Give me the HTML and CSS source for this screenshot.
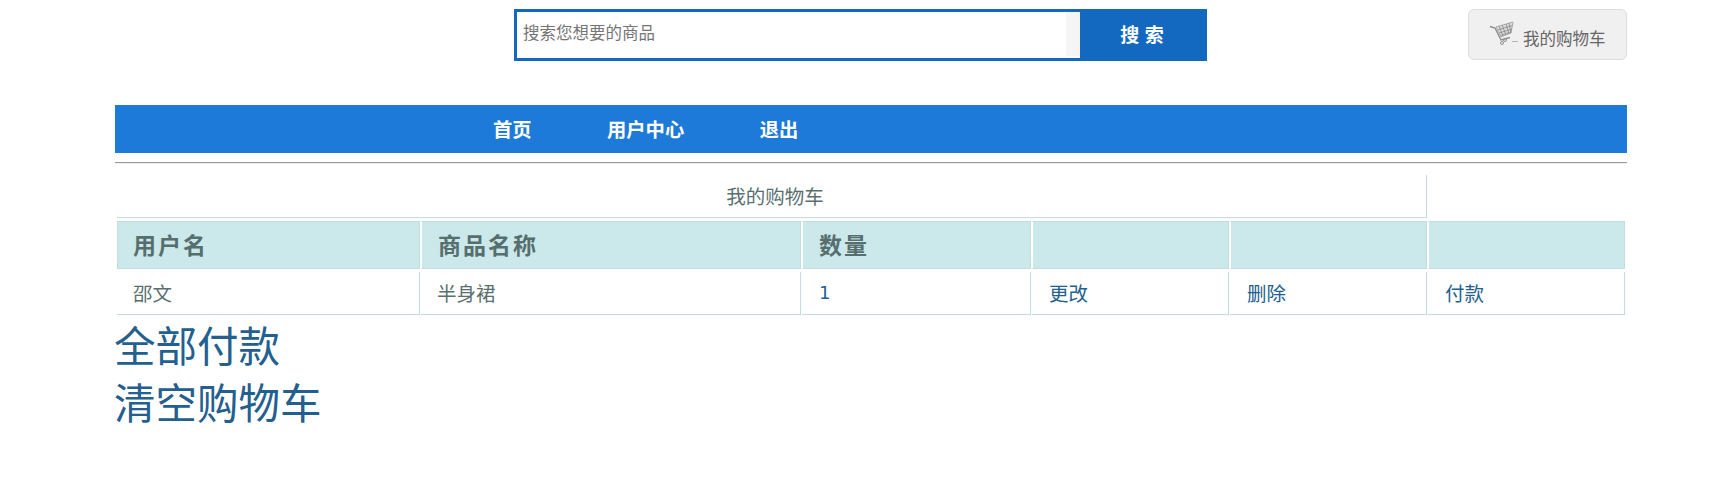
FILE: index.html
```html
<!DOCTYPE html>
<html lang="zh-CN">
<head>
    <meta charset="UTF-8">
    <title>我的购物车</title>
    <link rel="stylesheet" href="styles.css">
</head>
<body>
    <div class="top">
        <form class="search">
            <div class="search-input">搜索您想要的商品</div>
            <div class="search-strip"></div>
            <div class="search-btn">搜 索</div>
        </form>
        <a class="cart-btn" href="#">
            <svg class="cart-icon" width="30" height="26" viewBox="0 0 30 26">
                <path d="M2 7.5l5 1.5 6 12 9-2.5" fill="none" stroke="#8f8f8f" stroke-width="1.4"/>
                <path d="M8 8l17-5-2 11-10 4z" fill="#dcdcdc" stroke="#9a9a9a" stroke-width=".8"/>
                <path d="M11 7l4 10M14 6l4 10M18 5l3 10M21 4l2 10M9.500 11l15-4.500M11 14l13-4M12.500 16.500l10-3.500" fill="none" stroke="#7d7d7d" stroke-width=".7"/>
                <circle cx="17" cy="21" r="1.500" fill="none" stroke="#8f8f8f"/>
                <circle cx="14" cy="24" r="1.500" fill="none" stroke="#8f8f8f"/>
                <path d="M24 22.500h6" stroke="#b5b5b5"/>
            </svg>
            <span>我的购物车</span>
        </a>
    </div>

    <div class="nav">
        <a href="#">首页</a>
        <a href="#">用户中心</a>
        <a href="#">退出</a>
    </div>
    <hr class="line">

    <table class="cart-table">
        <colgroup>
            <col class="c1"><col class="c2"><col class="c3"><col class="c4"><col class="c5"><col class="c6">
        </colgroup>
        <tr>
            <td colspan="5" class="cap">我的购物车</td>
            <td class="blank"></td>
        </tr>
        <tr>
            <th>用户名</th>
            <th>商品名称</th>
            <th>数量</th>
            <th></th>
            <th></th>
            <th></th>
        </tr>
        <tr>
            <td>邵文</td>
            <td>半身裙</td>
            <td class="link num">1</td>
            <td class="link">更改</td>
            <td class="link">删除</td>
            <td class="link">付款</td>
        </tr>
    </table>

    <div class="actions">
        <a href="#">全部付款</a>
        <a href="#">清空购物车</a>
    </div>
</body>
</html>
```

FILE: styles.css
```css
body {
    margin: 0;
    padding: 0 106px 0 115px;
    font-family: "Liberation Sans", "Noto Sans CJK SC", sans-serif;
    color: #555;
    background: #fff;
}
a {
    text-decoration: none;
}
.top {
    display: flex;
    align-items: flex-start;
    padding-top: 9px;
    height: 105px;
    box-sizing: border-box;
}
.search {
    display: flex;
    width: 693px;
    height: 52px;
    margin-left: 399px;
    box-sizing: border-box;
    border: 3px solid #1368bf;
    background: #fff;
}
.search-input {
    flex: 1;
    color: #757575;
    font-size: 16.5px;
    line-height: 42px;
    padding-left: 6px;
}
.search-strip {
    width: 14px;
    margin-bottom: 2px;
    background: #f5f5f5;
}
.search-btn {
    width: 124px;
    background: #1368bf;
    color: #fff;
    font-size: 19px;
    font-weight: bold;
    line-height: 47px;
    text-align: center;
}
.cart-btn {
    display: flex;
    align-items: flex-start;
    gap: 5px;
    margin-left: auto;
    width: 159px;
    height: 51px;
    box-sizing: border-box;
    padding: 9px 0 0 19px;
    border: 1px solid #ddd;
    border-radius: 6px;
    background: #f0f0f0;
    color: #666;
    font-size: 16.5px;
    line-height: 34px;
}
.cart-btn span {
    margin-top: 3px;
}
.nav {
    display: flex;
    gap: 75.5px;
    height: 48px;
    padding-left: 378px;
    background: #1e7ad9;
}
.nav a {
    color: #fff;
    font-size: 19.3px;
    font-weight: bold;
    line-height: 51px;
}
.line {
    margin: 9px 0 0;
    border: 0;
    border-top: 1px solid #999;
    border-bottom: 1px solid #eee;
}
.cart-table {
    width: 1510px;
    margin: 8px 0 0 1px;
    border-collapse: separate;
    border-spacing: 1px 3px;
    table-layout: fixed;
    font-size: 19.5px;
}
.c1 { width: 303px; }
.c2 { width: 380px; }
.c3 { width: 229px; }
.c4 { width: 197px; }
.c5 { width: 197px; }
.cart-table td, .cart-table th {
    box-sizing: border-box;
    padding: 0 16px 2px;
    text-align: left;
    border-right: 1px solid #c3dcdc;
    border-bottom: 1px solid #c3dcdc;
}
.cart-table td {
    height: 43px;
    color: #5a7070;
}
.cart-table th {
    height: 48px;
    background: #cbe8ea;
    color: #566e6e;
    font-size: 23px;
    letter-spacing: 2px;
    border: 1px solid #c3dcdc;
    border-left: 1px solid #fff;
}
.cart-table th:first-child {
    padding-left: 15px;
    border-left-color: #c3dcdc;
}
.cart-table td.cap {
    height: 40px;
    padding: 0 16px 2px 23px;
    text-align: center;
}
.cart-table td.blank {
    border: 0;
}
.cart-table td.link {
    padding-left: 17px;
    color: #23608f;
}
.cart-table td.num {
    font-family: "DejaVu Sans", sans-serif;
    font-size: 18px;
}
.actions {
    margin-left: -1px;
    padding-top: 1px;
}
.actions a {
    display: block;
    color: #23608f;
    font-size: 41.5px;
    line-height: 57px;
}
```
